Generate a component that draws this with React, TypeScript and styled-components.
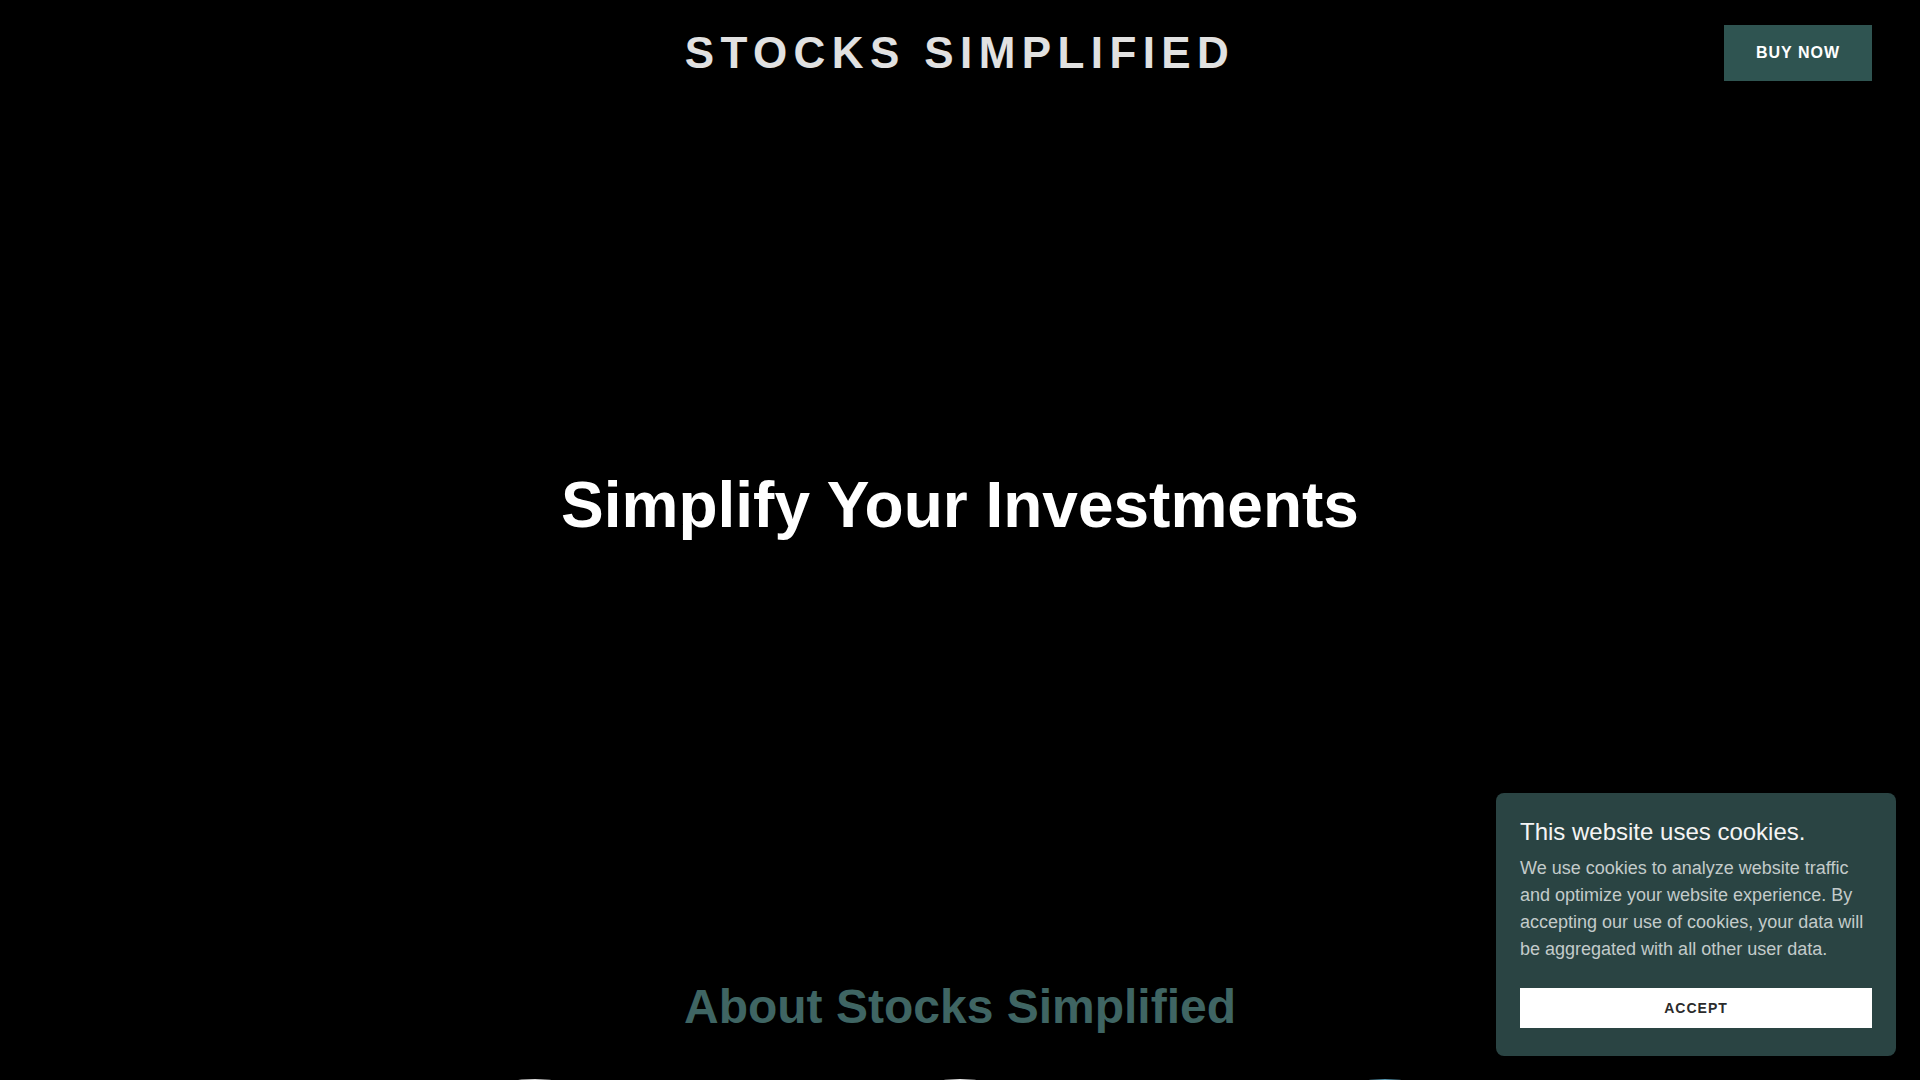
import React from "react";
import styled, { createGlobalStyle } from "styled-components";

const GlobalStyle = createGlobalStyle`
  html, body {
    margin: 0;
    padding: 0;
    background: #000000;
    font-family: "Liberation Sans", Arial, sans-serif;
    overflow: hidden;
  }
  * { box-sizing: border-box; }
`;

const Page = styled.div`
  min-height: 1080px;
  background: #000000;
  display: flex;
  flex-direction: column;
`;

const Header = styled.header`
  display: grid;
  grid-template-columns: 1fr auto 1fr;
  align-items: center;
  padding: 25px 48px 25px;
  height: 106px;
`;

const SiteTitle = styled.h1`
  grid-column: 2;
  margin: 0;
  font-size: 44px;
  font-weight: 700;
  letter-spacing: 6.4px;
  color: #e1e1e1;
  line-height: 56px;
  white-space: nowrap;
`;

const BuyButton = styled.button`
  grid-column: 3;
  justify-self: end;
  width: 148px;
  height: 56px;
  border: none;
  background: #2f5451;
  color: #ffffff;
  font-family: inherit;
  font-size: 16px;
  font-weight: 700;
  letter-spacing: 1px;
  text-transform: uppercase;
  cursor: pointer;
`;

const Hero = styled.section`
  height: 798px;
  display: flex;
  align-items: center;
  justify-content: center;
`;

const HeroTitle = styled.h2`
  margin: 0;
  font-size: 64px;
  font-weight: 700;
  color: #ffffff;
  line-height: 1.2;
`;

const About = styled.section`
  padding-top: 74px;
  display: flex;
  flex-direction: column;
  align-items: center;
`;

const AboutTitle = styled.h2`
  margin: 0;
  font-size: 48px;
  font-weight: 700;
  line-height: 57.6px;
  color: #3f6563;
`;

const FeatureRow = styled.div`
  margin-top: 43px;
  display: grid;
  grid-template-columns: repeat(3, 425px);
  justify-items: center;
`;

const FeatureImage = styled.div<{ $tone: string }>`
  width: 300px;
  height: 300px;
  border-radius: 50%;
  background: ${(p) => p.$tone};
`;

const CookieBanner = styled.aside`
  position: fixed;
  right: 24px;
  bottom: 24px;
  width: 400px;
  background: #2a4443;
  border-radius: 8px;
  padding: 24px 24px 28px;
  display: flex;
  flex-direction: column;
`;

const CookieTitle = styled.h3`
  margin: 0 0 8px;
  font-size: 24px;
  font-weight: 400;
  line-height: 30px;
  color: #f4f4f4;
`;

const CookieText = styled.p`
  margin: 0 0 25px;
  font-size: 18px;
  line-height: 27px;
  color: #c3cbca;
`;

const AcceptButton = styled.button`
  height: 40px;
  width: 100%;
  border: none;
  background: #ffffff;
  color: #2b2b2b;
  font-family: inherit;
  font-size: 14px;
  font-weight: 700;
  letter-spacing: 1px;
  text-transform: uppercase;
  cursor: pointer;
`;

export default function App() {
  return (
    <>
      <GlobalStyle />
      <Page>
        <Header>
          <SiteTitle>STOCKS SIMPLIFIED</SiteTitle>
          <BuyButton>Buy Now</BuyButton>
        </Header>
        <Hero>
          <HeroTitle>Simplify Your Investments</HeroTitle>
        </Hero>
        <About>
          <AboutTitle>About Stocks Simplified</AboutTitle>
          <FeatureRow>
            <FeatureImage $tone="linear-gradient(180deg, #d8d8d8 0%, #6f6f6f 100%)" />
            <FeatureImage $tone="linear-gradient(180deg, #e6e6e6 0%, #7a7a7a 100%)" />
            <FeatureImage $tone="linear-gradient(90deg, #3c7a94 0%, #5a9bb4 60%, #9a9a9a 100%)" />
          </FeatureRow>
        </About>
      </Page>
      <CookieBanner>
        <CookieTitle>This website uses cookies.</CookieTitle>
        <CookieText>
          We use cookies to analyze website traffic and optimize your website
          experience. By accepting our use of cookies, your data will be
          aggregated with all other user data.
        </CookieText>
        <AcceptButton>Accept</AcceptButton>
      </CookieBanner>
    </>
  );
}
